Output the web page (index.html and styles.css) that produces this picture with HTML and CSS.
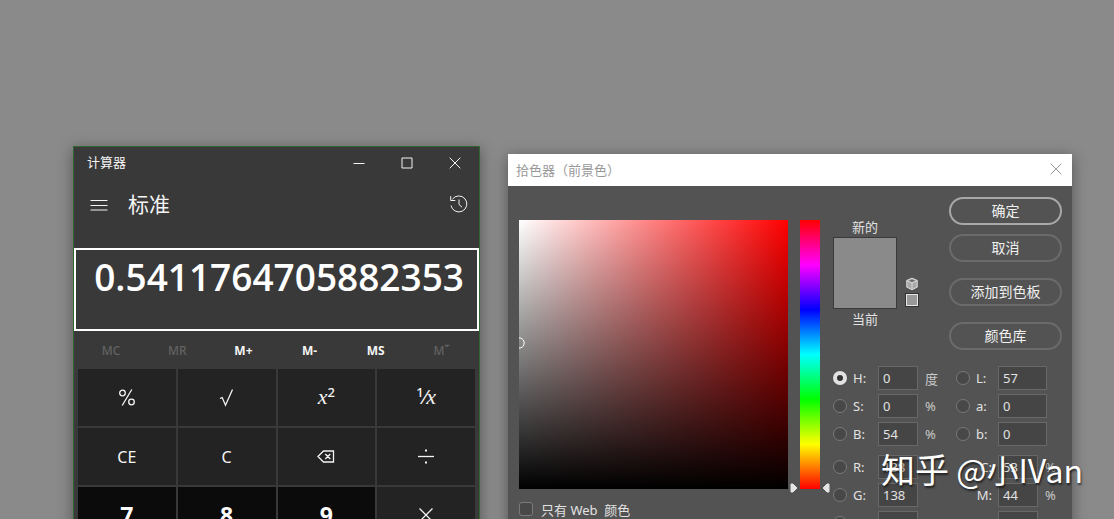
FILE: index.html
```html
<!DOCTYPE html>
<html lang="zh-CN">
<head>
<meta charset="utf-8">
<title>计算器与拾色器</title>
<meta name="viewport" content="width=device-width, initial-scale=1">
<link rel="stylesheet" href="styles.css">
</head>
<body>
<main class="desktop">
  <section class="calc" aria-label="计算器">
    <header class="calc-title">
      <span class="calc-name">计算器</span>
      <button class="win-btn" aria-label="最小化"><svg width="12" height="12" viewBox="0 0 12 12"><path d="M.5 6.500h11"/></svg></button>
      <button class="win-btn" aria-label="最大化"><svg width="12" height="12" viewBox="0 0 12 12"><path d="M1 1h10v10H1z"/></svg></button>
      <button class="win-btn" aria-label="关闭"><svg width="12" height="12" viewBox="0 0 12 12"><path d="M.7.7l10.600 10.600M11.300.7L.7 11.300"/></svg></button>
    </header>
    <div class="calc-mode">
      <button class="icon-btn" aria-label="菜单"><svg width="18" height="12" viewBox="0 0 18 12"><path d="M.5 1.500h17M.5 6.500h17M.5 11h17"/></svg></button>
      <h1 class="mode-name">标准</h1>
      <button class="icon-btn history" aria-label="历史记录"><svg width="20" height="20" viewBox="0 0 20 20"><path d="M2 11.500A8 8 0 1 0 3.400 5.200M1.700 2.200v4.300h4.600M10 5.500v5l3 2.700"/></svg></button>
    </div>
    <output class="display">0.5411764705882353</output>
    <div class="memory">
      <button class="mem" disabled>MC</button>
      <button class="mem" disabled>MR</button>
      <button class="mem">M+</button>
      <button class="mem">M-</button>
      <button class="mem">MS</button>
      <button class="mem" disabled aria-label="M 列表">M<svg class="caret" width="6" height="4" viewBox="0 0 6 4"><path d="M0 .8h6L3 3.200z"/></svg></button>
    </div>
    <div class="keys">
      <button class="key" aria-label="百分比"><svg width="20" height="20" viewBox="0 0 20 20"><circle cx="5.500" cy="5" r="2.800"/><circle cx="14.500" cy="14" r="2.800"/><path d="M14.800 1.500L5.200 17.500"/></svg></button>
      <button class="key" aria-label="平方根"><svg width="20" height="20" viewBox="0 0 20 20"><path d="M3 10.500l2.200-1 3.300 7.700L15.500 1.500"/></svg></button>
      <button class="key math"><i>x</i><sup>2</sup></button>
      <button class="key math"><sup>1</sup><span class="slash">⁄</span><i>x</i></button>
      <button class="key">CE</button>
      <button class="key">C</button>
      <button class="key" aria-label="退格"><svg width="20" height="20" viewBox="0 0 20 20"><path d="M2 9.500L7.500 4h10v11h-10zM9.300 7l5 5M14.300 7l-5 5"/></svg></button>
      <button class="key" aria-label="除"><svg width="20" height="20" viewBox="0 0 20 20"><path d="M2 9.500h16"/><path class="dot" d="M9 2.500h2v2H9zM9 14.500h2v2H9z"/></svg></button>
      <button class="key digit">7</button>
      <button class="key digit">8</button>
      <button class="key digit">9</button>
      <button class="key" aria-label="乘"><svg width="20" height="20" viewBox="0 0 20 20"><path d="M3.500 2.500l13 13M16.500 2.500l-13 13"/></svg></button>
    </div>
  </section>

  <section class="picker" aria-label="拾色器（前景色）">
    <header class="picker-title">
      <span>拾色器（前景色）</span>
      <button class="picker-close" aria-label="关闭"><svg width="12" height="12" viewBox="0 0 12 12"><path d="M.7.7l10.600 10.600M11.300.7L.7 11.300"/></svg></button>
    </header>
    <div class="picker-body">
      <div class="mixer">
        <div class="mixer-row">
          <div class="field"><svg class="marker" width="7" height="12" viewBox="0 0 7 12"><path d="M0 .8a5.200 5.200 0 0 1 0 10.400"/></svg></div>
          <div class="hue">
            <svg class="thumb thumb-left" width="8" height="10" viewBox="0 0 8 10"><path d="M1 1h2l4 4-4 4H1z"/></svg>
            <svg class="thumb thumb-right" width="8" height="10" viewBox="0 0 8 10"><path d="M7 1H5L1 5l4 4h2z"/></svg>
          </div>
        </div>
        <label class="web-only"><input class="check" type="checkbox"><span>只有 Web&nbsp; 颜色</span></label>
      </div>
      <div class="side">
        <div class="top">
          <div class="compare">
            <span>新的</span>
            <div class="swatch"></div>
            <span>当前</span>
          </div>
          <div class="warn">
            <svg width="14" height="14" viewBox="0 0 14 14"><path class="cube" d="M7 .8l5.600 2.500v7L7 13.200 1.400 10.300v-7z"/><path class="cube-top" d="M7 2.500l3 1.200-3 1.300-3-1.300z"/><path class="cube-line" d="M7 1.200L12.200 3.500 7 6 1.800 3.500zM1.800 3.500v6.600L7 12.700l5.200-2.600V3.500M7 6v6.500"/></svg>
            <div class="web-swatch"></div>
          </div>
          <div class="actions">
            <button class="pill primary">确定</button>
            <button class="pill">取消</button>
            <button class="pill spaced">添加到色板</button>
            <button class="pill spaced">颜色库</button>
          </div>
        </div>
        <div class="values">
          <div class="group">
            <div class="row"><input class="radio" type="radio" name="ch" aria-label="色相" checked><label for="h">H:</label><input class="num" id="h" value="0"><span class="unit">度</span></div>
            <div class="row"><input class="radio" type="radio" name="ch" aria-label="饱和度"><label for="s">S:</label><input class="num" id="s" value="0"><span class="unit">%</span></div>
            <div class="row"><input class="radio" type="radio" name="ch" aria-label="亮度"><label for="br">B:</label><input class="num" id="br" value="54"><span class="unit">%</span></div>
          </div>
          <div class="group lab">
            <div class="row"><input class="radio" type="radio" name="ch" aria-label="明度 L"><label for="l">L:</label><input class="num wide" id="l" value="57"></div>
            <div class="row"><input class="radio" type="radio" name="ch" aria-label="通道 a"><label for="a">a:</label><input class="num wide" id="a" value="0"></div>
            <div class="row"><input class="radio" type="radio" name="ch" aria-label="通道 b"><label for="b">b:</label><input class="num wide" id="b" value="0"></div>
          </div>
          <div class="group">
            <div class="row"><input class="radio" type="radio" name="ch" aria-label="红"><label for="r">R:</label><input class="num" id="r" value="138"></div>
            <div class="row"><input class="radio" type="radio" name="ch" aria-label="绿"><label for="g">G:</label><input class="num" id="g" value="138"></div>
            <div class="row"><input class="radio" type="radio" name="ch" aria-label="蓝"><label for="bl">B:</label><input class="num" id="bl" value="138"></div>
          </div>
          <div class="group cmyk">
            <div class="row"><label for="c">C:</label><input class="num" id="c" value="53"><span class="unit">%</span></div>
            <div class="row"><label for="m">M:</label><input class="num" id="m" value="44"><span class="unit">%</span></div>
            <div class="row"><label for="y">Y:</label><input class="num" id="y" value="42"><span class="unit">%</span></div>
          </div>
        </div>
      </div>
    </div>
  </section>

  <div class="watermark"><span class="site">知乎</span> @小IVan</div>
</main>
</body>
</html>
```

FILE: styles.css
```css
* {
  box-sizing: border-box;
}

body {
  margin: 0;
  font-family: "Noto Sans", "Noto Sans CJK SC", sans-serif;
  font-size: 13px;
}

button,
input {
  margin: 0;
  padding: 0;
  border: 0;
  background: none;
  color: inherit;
  font: inherit;
}

svg {
  display: block;
  fill: none;
  stroke: currentColor;
}

.desktop {
  position: relative;
  height: 100vh;
  overflow: hidden;
  background: #8a8a8a;
}

/* Calculator window */
.calc {
  position: absolute;
  left: 73px;
  top: 146px;
  width: 407px;
  border: 1px solid #2f6631;
  background: #393939;
  color: #f4f4f4;
  box-shadow: 0 3px 14px rgba(0, 0, 0, 0.4);
}

.calc-title {
  display: flex;
  align-items: center;
  height: 31px;
  padding-left: 13px;
}

.calc-name {
  flex: 1;
  line-height: 20px;
  padding-bottom: 2px;
}

.win-btn {
  display: grid;
  place-items: center;
  width: 48px;
  height: 31px;
}

.calc-mode {
  display: flex;
  align-items: center;
  height: 70px;
  padding: 0 10px 16px 16px;
}

.mode-name {
  flex: 1;
  margin: 0 0 0 20px;
  padding-bottom: 2px;
  font-size: 21px;
  font-weight: 400;
  line-height: 28px;
}

.history {
  padding-bottom: 2px;
}

.display {
  display: block;
  height: 83px;
  padding: 0 13px 0 0;
  border: 2px solid #fff;
  color: #fff;
  font-family: "Open Sans", "Noto Sans", sans-serif;
  font-size: 37px;
  font-weight: 600;
  line-height: 54px;
  text-align: right;
}

.memory {
  display: grid;
  grid-template-columns: repeat(6, 1fr);
  height: 38px;
  padding: 0 4px;
}

.mem {
  display: flex;
  align-items: center;
  justify-content: center;
  font-size: 12px;
  font-weight: 700;
}

.mem:disabled {
  color: #626262;
  font-weight: 500;
}

.caret {
  align-self: flex-start;
  margin-top: 13px;
  fill: currentColor;
  stroke: none;
}

.keys {
  display: grid;
  grid-template-columns: repeat(4, 1fr);
  grid-auto-rows: 57px;
  gap: 2px;
  padding: 0 4px 4px;
}

.key {
  display: flex;
  align-items: center;
  justify-content: center;
  background: #232323;
  font-size: 16px;
}

.key svg {
  stroke-width: 1.3;
}

.key .dot {
  fill: currentColor;
  stroke: none;
}

.digit {
  padding-bottom: 2px;
  background: #0b0b0b;
  color: #fff;
  font-size: 23px;
  font-weight: 700;
}

.math {
  padding-bottom: 2px;
}

.math i {
  font-family: "Liberation Serif", serif;
  font-size: 22px;
}

.math sup {
  margin-bottom: 10px;
  font-size: 13px;
  font-weight: 500;
  line-height: 16px;
}

.slash {
  font-size: 20px;
}

/* Colour picker window */
.picker {
  position: absolute;
  left: 508px;
  top: 154px;
  width: 564px;
  background: #535353;
  color: #e2e2e2;
  box-shadow: 0 3px 14px rgba(0, 0, 0, 0.4);
}

.picker-title {
  display: flex;
  align-items: center;
  justify-content: space-between;
  height: 32px;
  padding: 0 10px 2px 8px;
  background: #fff;
  color: #999;
}

.picker-body {
  display: flex;
  gap: 13px;
  padding: 11px 10px 11px 11px;
}

.mixer {
  padding-top: 23px;
}

.mixer-row {
  display: flex;
  gap: 12px;
}

.field {
  position: relative;
  width: 269px;
  height: 269px;
  background:
    linear-gradient(to top, #000, transparent),
    linear-gradient(to right, #fff, #f00);
}

.marker {
  position: absolute;
  left: 0;
  top: 117px;
  color: #fff;
}

.hue {
  position: relative;
  width: 20px;
  background: linear-gradient(#f00, #f0f, #00f, #0ff, #0f0, #ff0, #f00);
}

.thumb {
  position: absolute;
  bottom: -4px;
  fill: #e4e4e4;
  stroke: #e4e4e4;
}

.thumb-left {
  right: 22px;
}

.thumb-right {
  left: 22px;
}

.web-only {
  display: flex;
  align-items: center;
  gap: 8px;
  height: 20px;
  margin-top: 10px;
}

.check {
  appearance: none;
  width: 14px;
  height: 14px;
  border: 1px solid #7a7a7a;
  border-radius: 3px;
  background: #484848;
}

.side {
  flex: 1;
}

.top {
  display: flex;
}

.compare {
  display: flex;
  flex-direction: column;
  align-items: center;
  padding-top: 20px;
  font-size: 13px;
  line-height: 20px;
}

.swatch {
  width: 64px;
  height: 72px;
  border: 1px solid #3a3a3a;
  background: #8a8a8a;
}

.warn {
  display: flex;
  flex-direction: column;
  gap: 2px;
  padding: 80px 0 0 8px;
}

.cube {
  fill: #a8a8a8;
  stroke: none;
}

.cube-top {
  fill: #666;
  stroke: none;
}

.cube-line {
  stroke: #d6d6d6;
}

.web-swatch {
  width: 14px;
  height: 14px;
  border: 1px solid #333;
  background: #999;
  box-shadow: inset 0 0 0 1px #e6e6e6;
}

.actions {
  display: flex;
  flex: 1;
  flex-direction: column;
  gap: 9px;
  padding-left: 30px;
}

.pill {
  height: 28px;
  padding-bottom: 1px;
  border: 2px solid #6b6b6b;
  border-radius: 14px;
  color: #f0f0f0;
  font-size: 14px;
  line-height: 20px;
}

.primary {
  border-color: #a8a8a8;
}

.spaced {
  margin-top: 7px;
}

.values {
  display: grid;
  grid-template-columns: 123px 1fr;
  row-gap: 9px;
  padding-top: 16px;
}

.group {
  display: grid;
  gap: 4px;
}

.row {
  display: flex;
  align-items: center;
  height: 24px;
}

.row label {
  width: 25px;
  margin-left: 6px;
}

.lab label {
  width: 22px;
}

.radio {
  appearance: none;
  width: 14px;
  height: 14px;
  border: 1px solid #7a7a7a;
  border-radius: 50%;
  background: #484848;
}

.radio:checked {
  border: 4px solid #e2e2e2;
  background: #333;
}

.num {
  width: 40px;
  height: 24px;
  padding: 0 4px;
  border: 1px solid #686868;
  background: #454545;
}

.wide {
  width: 49px;
}

.unit {
  margin-left: 7px;
  color: #c8c8c8;
}

.cmyk label {
  width: 42px;
  margin: 0;
  padding-right: 6px;
  text-align: right;
}

/* Signature over the windows */
.watermark {
  position: absolute;
  right: 31px;
  bottom: 26px;
  color: #fff;
  font-family: "Noto Sans CJK SC", sans-serif;
  font-size: 32px;
  line-height: 48px;
  text-shadow: 1px 2px 2px rgba(0, 0, 0, 0.6);
  white-space: nowrap;
}

.site {
  font-size: 34px;
}
```
